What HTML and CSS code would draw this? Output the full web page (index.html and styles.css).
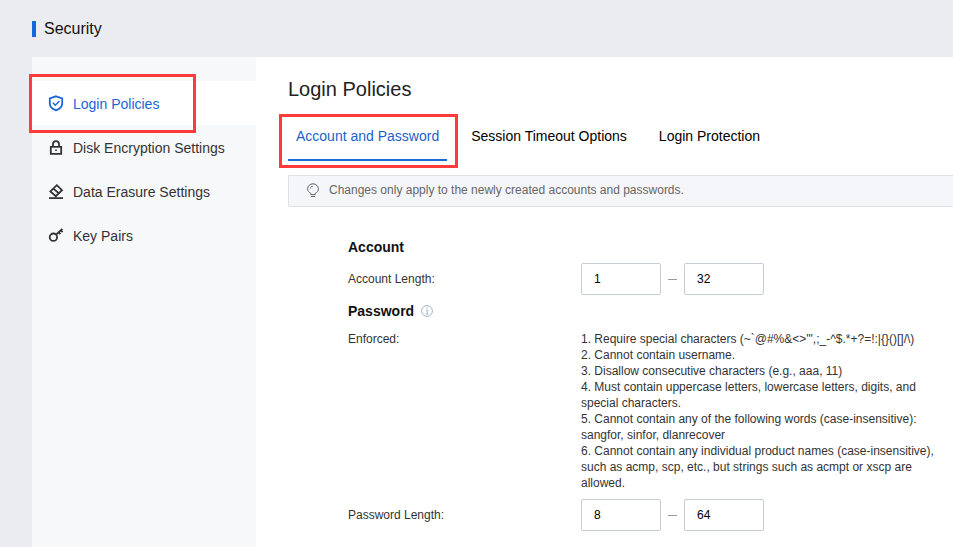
FILE: index.html
```html
<!DOCTYPE html>
<html lang="en">
<head>
<meta charset="utf-8">
<title>Security</title>
<link rel="stylesheet" href="styles.css">
</head>
<body>
<header class="page-header"><h1 class="page-title">Security</h1></header>
<div class="layout">
  <nav class="sidebar">
    <a class="nav-item nav-item-active marked" href="#login">
      <svg class="icon" viewBox="0 0 16 16"><path d="M8 .3 14.2 2.4V7.8C14.2 11 11.4 13.1 8 14.4 4.6 13.1 1.8 11 1.8 7.8V2.4Z"/><path d="M4.8 6.7 7.3 9.2 11.4 5.1" stroke-width="1.4"/></svg>
      <span>Login Policies</span>
    </a>
    <a class="nav-item" href="#disk">
      <svg class="icon" viewBox="0 0 16 16"><path d="M2.8 6.8H13.2V13.9H2.8ZM5 6.4V4.2C5 .2 11 .2 11 4.2V6.4"/><path d="M7.2 9.4H8.8V11H7.2Z" class="solid"/></svg>
      <span>Disk Encryption Settings</span>
    </a>
    <a class="nav-item" href="#erase">
      <svg class="icon" viewBox="0 0 16 16"><path d="M8.8 1.2 14 6.2 7.8 12.2 2.4 7.4ZM5.4 4.6 10.9 9.4M1 14.1H15"/></svg>
      <span>Data Erasure Settings</span>
    </a>
    <a class="nav-item" href="#keys">
      <svg class="icon" viewBox="0 0 16 16"><circle cx="5.4" cy="9.2" r="3.7"/><path d="M8 6.6 14.4 1M10.6 4.4 12.4 6.2M12.8 2.4 14.6 4.2"/></svg>
      <span>Key Pairs</span>
    </a>
  </nav>
  <main class="content">
    <h2 class="content-title">Login Policies</h2>
    <div class="tabs" role="tablist">
      <button class="tab tab-active marked" type="button" role="tab" aria-selected="true">Account and Password</button>
      <button class="tab" type="button" role="tab">Session Timeout Options</button>
      <button class="tab" type="button" role="tab">Login Protection</button>
    </div>
    <div class="notice">
      <svg class="icon icon-thin" viewBox="0 0 16 16"><path d="M5.8 10.3C3.9 9.4 2.6 8 2.6 5.8 2.6 3 5 .8 8 .8S13.4 3 13.4 5.8C13.4 8 12.1 9.4 10.2 10.3V11.6H5.8ZM6 13.5H10M5.3 5.6C5.4 4.2 6.4 3.3 7.8 3.2"/></svg>
      <span>Changes only apply to the newly created accounts and passwords.</span>
    </div>
    <form class="form">
      <h3 class="section-title">Account</h3>
      <div class="row row-center">
        <label class="row-label" for="account-min">Account Length:</label>
        <div class="range">
          <input class="number" id="account-min" type="text" value="1">
          <span class="dash"></span>
          <input class="number" type="text" value="32" aria-label="Maximum account length">
        </div>
      </div>
      <h3 class="section-title">Password
        <svg class="info" viewBox="0 0 12 12"><circle cx="6" cy="6" r="5.4"/><path d="M4.8 5H6.2V9M4.6 9H7.6M5.4 3H6.8"/></svg>
      </h3>
      <div class="row row-text">
        <span class="row-label">Enforced:</span>
        <ol class="rules">
          <li>Require special characters (~`@#%&amp;&lt;&gt;'",;_-^$.*+?=!:|{}()[]/\)</li>
          <li>Cannot contain username.</li>
          <li>Disallow consecutive characters (e.g., aaa, 11)</li>
          <li>Must contain uppercase letters, lowercase letters, digits, and special characters.</li>
          <li>Cannot contain any of the following words (case-insensitive): sangfor, sinfor, dlanrecover</li>
          <li>Cannot contain any individual product names (case-insensitive), such as acmp, scp, etc., but strings such as acmpt or xscp are allowed.</li>
        </ol>
      </div>
      <div class="row row-center">
        <label class="row-label" for="password-min">Password Length:</label>
        <div class="range">
          <input class="number" id="password-min" type="text" value="8">
          <span class="dash"></span>
          <input class="number" type="text" value="64" aria-label="Maximum password length">
        </div>
      </div>
    </form>
  </main>
</div>
</body>
</html>
```
FILE: styles.css
```css
* { box-sizing: border-box; }

body {
  margin: 0;
  min-height: 100vh;
  display: flex;
  flex-direction: column;
  background: #ebecf0;
  color: #333;
  font: 12px/16px "Liberation Sans", Arial, sans-serif;
}

h1, h2, h3, ol { margin: 0; padding: 0; font-weight: normal; }

.page-header { padding: 21px 32px 20px; }

.page-title {
  border-left: 4px solid #1268dc;
  padding-left: 8px;
  color: #111;
  font-size: 16px;
  line-height: 16px;
}

.layout { display: flex; flex: 1; padding-left: 32px; }

.sidebar {
  flex: 0 0 224px;
  padding-top: 24px;
  background: #f7f8fa;
}

.nav-item {
  position: relative;
  display: flex;
  align-items: center;
  gap: 9px;
  height: 44px;
  padding: 2px 16px 0;
  color: #333;
  font-size: 14px;
  text-decoration: none;
}

.nav-item-active { background: #fff; color: #1c66d6; }

.icon {
  flex: none;
  width: 16px;
  height: 16px;
  overflow: visible;
  fill: none;
  stroke: currentColor;
  stroke-width: 1.8;
}

.icon-thin { stroke-width: 1; }

.solid { fill: currentColor; stroke: none; }

.marked::after {
  content: "";
  position: absolute;
  z-index: 1;
  border: 3px solid #ff3b3b;
  pointer-events: none;
}

.nav-item.marked::after { inset: -7px 60px -8px -3px; }

.tab.marked::after { inset: 2px -11px -7px -9px; }

.content {
  flex: 1;
  min-width: 0;
  padding: 20px 0 16px 32px;
  background: #fff;
}

.content-title { color: #222; font-size: 20px; line-height: 24px; }

.tabs { display: flex; gap: 16px; margin-top: 11px; }

.tab {
  position: relative;
  height: 49px;
  padding: 0 8px 2px;
  border: 0;
  background: none;
  color: #000;
  font: 14px/16px "Liberation Sans", Arial, sans-serif;
  white-space: nowrap;
}

.tab-active { color: #1c5fcc; box-shadow: inset 0 -2px #1a6ad4; }

.notice {
  display: flex;
  align-items: center;
  gap: 8px;
  height: 32px;
  margin-top: 14px;
  padding: 0 16px;
  border: 1px solid #dfe1e6;
  border-right: 0;
  border-radius: 2px 0 0 2px;
  background: #f5f6fa;
  color: #666;
}

.notice span { padding-bottom: 2px; }

.form { padding: 32px 16px 0 60px; }

.section-title {
  display: flex;
  align-items: center;
  gap: 7px;
  color: #111;
  font-size: 14px;
  font-weight: bold;
  line-height: 16px;
}

.info {
  width: 12px;
  height: 12px;
  fill: none;
  stroke: #a6b4c2;
}

.row { display: flex; margin: 8px 0; }
.row-center { align-items: center; }
.row-text { margin-top: 12px; }
.row-label { flex: 0 0 233px; }

.rules { flex: 0 1 356px; counter-reset: rule; }
.rules li { display: block; counter-increment: rule; }
.rules li::before { content: counter(rule) ". "; }

.range { display: flex; align-items: center; }

.number {
  width: 80px;
  height: 32px;
  padding: 0 12px;
  border: 1px solid #c8ccd6;
  border-radius: 2px;
  background: #fff;
  color: #000;
  font: 12px/16px "Liberation Sans", Arial, sans-serif;
}

.dash { width: 9px; height: 1px; margin: 0 7px; background: #999; }
```
